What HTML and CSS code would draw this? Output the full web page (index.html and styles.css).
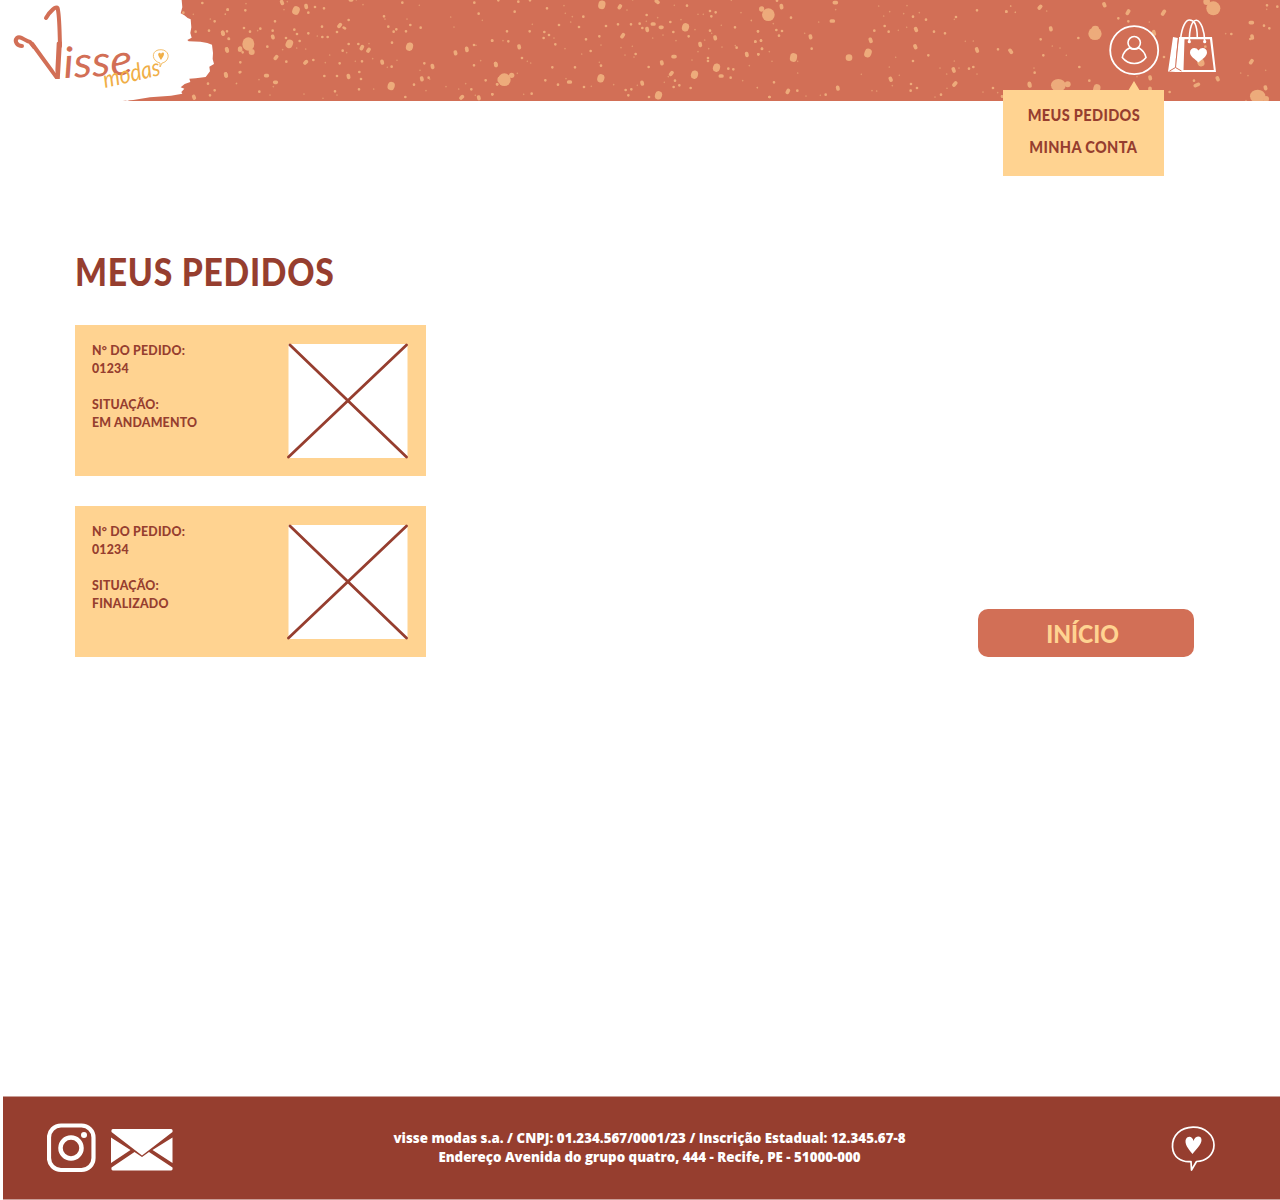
FILE: index.html
```html
<!DOCTYPE html>
<html lang="pt-BR">
<head>
<meta charset="utf-8">
<title>Visse Modas - Meus Pedidos</title>
<link rel="stylesheet" href="styles.css">
</head>
<body>
<header class="header">
  <svg class="header-art" width="1280" height="101" viewBox="0 0 1280 101" aria-hidden="true">
    <g transform="scale(.33333)">
      <path class="m" d="M668 97l2 5M680 147l2 6M677 222l2 6M581 289l2 5M719 146v4"/>
      <path class="s" d="M607 9h0M683 29h0M644 64h0M587 95h0M627 92h0M686 116h0M624 251h0M644 271h0M630 286h0M550 38h0M719 217h0"/>
      <path class="t" d="M580 43h0M676 43h0M631 57h0M710 250h0"/>
      <path class="brush" d="M0 0H545L547 22L542 40L553 46L563 54L572 58L574 82L571 99L575 113L562 120L566 124L601 125L622 129L636 134L639 159L638 177L642 192L628 200L630 214L617 231L587 235L568 236L571 246L554 252L542 262L553 266L544 276L547 281L513 287L450 292L400 300L366 303H0Z"/>
      <path class="brush-dots" d="M366 301h3M380 301h4M460 286h5"/>
    </g>
    <g transform="translate(220 0) scale(.33333)">
      <ellipse cx="85" cy="132" rx="18" ry="20"/><circle cx="95" cy="156" r="9"/>
      <path class="l" d="M229 29l-2 5M209 129l-2 5M569 138l-1 4M514 256l-1 4"/>
      <path class="m" d="M185 5l2 5M258 17l1 5M8 97l1 5M20 147l1 4M61 144l1 6M158 109l1 4M17 222l1 5M170 170l-4 5M259 185l-4 4M142 227h-5M169 247h-5M361 74l-4 5M427 140l-3 6M447 148l-3 5M486 184l1 5M385 227l1 5M637 197l1 5M605 234l1 5M706 156l1 5M740 145l1 6M827 191l1 5M727 290l-4 4M776 291l1 5M391 0h4M838 236v6"/>
      <path class="s" d="M23 29h0M76 31h0M285 21h0M265 38h0M312 25h0M165 64h0M72 84h0M121 86h0M158 92h0M90 95h0M21 94h0M223 89h0M231 102h0M265 100h0M306 80h0M386 60h0M351 96h0M371 83l4 2M307 111h0M323 111h0M239 123h0M198 114h0M142 140h0M27 117h0M68 157h0M199 185h0M280 180h0M359 190h0M368 152h0M386 132h0M415 132h0M426 184h0M61 187h0M61 216h0M313 228h0M351 228h0M118 275h0M345 274h0M417 268h0M418 216h0M423 237h0M515 200h0M516 128h0M492 49h0M505 80h0M529 88h0M521 95h0M558 94h0M571 75h0M602 83h0M547 8h0M763 8h0M776 41h0M817 122h0M762 135h0M762 196h0M613 190h0M626 233h0M582 254h0M556 291h0M754 268h0M797 241h0M817 283h0M832 253h0"/>
      <path class="t" d="M78 11h0M202 5h0M192 29h0M16 42h0M113 92h0M292 108h0M230 144h0M188 149h0M257 147h0M329 165h0M316 188h0M380 158h0M406 184h0M447 131h0M458 176h0M502 202h0M531 181h0M495 57h0M561 57h0M598 16h0M429 14h0M409 0h0M692 51h0M702 81h0M787 61h0M768 136h0M782 182h0M600 211h0M629 237h0M678 260h0M618 272h0M716 267h0M737 251h0M766 286h0M461 267h0M351 285h0M309 295h0M252 282h0M150 285h0M117 239h0M49 251h0M160 260h0"/>
    </g>
    <g transform="translate(490 0) scale(.33333)">
      <circle cx="43" cy="239" r="19"/><circle cx="65" cy="226" r="8"/>
      <path class="l" d="M336 12l-1 5M587 80l-1 4M333 233l-1 4M614 222l-1 4M680 201l-1 4M506 284l-1 4"/>
      <path class="m" d="M391 18l-3 5M499 3l5 4M492 72h-5M516 82h-5M471 86l1 5M400 104l-4 6M87 138l1 5M17 191l1 5M241 246h-5M456 247l1 5M515 186l1 5M555 170h-6M546 218l-4 5M630 131l1 5M675 111l1 5M696 228h-5M770 161l1 5"/>
      <path class="s" d="M74 35h0M85 5h0M25 1h0M120 1h0M171 25h0M280 50h0M207 75h0M267 81h0M51 94h0M119 94h0M163 96h0M177 105h0M161 114h0M196 133h0M288 118h0M328 109h0M348 78h0M384 73h0M423 73h0M449 71h0M457 84h0M470 45h0M541 66h0M550 96h0M591 17h0M596 109h0M660 33h0M677 37h0M664 49h0M660 92h0M735 82h0M804 94h0M796 125h0M813 122h0M816 146h0M805 163h0M740 143h0M654 174h0M654 183h0M437 162h0M476 201h0M302 153h0M333 197h0M255 202h0M187 202h0M96 174h0M55 124h0M6 122h0M21 253h0M7 283h0M166 241h0M204 254h0M125 281h0M282 261h0M407 270h0M424 268h0M415 286h0M477 291h0M555 242h0M551 261h0M568 256h0M602 264h0M715 206h0M730 208h0M722 233h0M838 291h0"/>
      <path class="t" d="M222 17h0M226 40h0M247 50h0M242 66h0M127 73h0M192 114h0M225 146h0M275 162h0M333 135h0M393 143h0M427 139h0M405 165h0M432 171h0M328 187h0M112 184h0M122 189h0M39 122h0M82 220h0M101 283h0M228 236h0M304 259h0M371 254h0M442 256h0M523 247h0M535 230h0M606 180h0M624 155h0M644 120h0M656 146h0M665 100h0M694 76h0M615 89h0M558 122h0M488 114h0M519 105h0M469 64h0M503 53h0M553 16h0M624 43h0M640 43h0M573 59h0M411 30h0M753 38h0M784 61h0M696 141h0M736 137h0M778 197h0M758 242h0M802 263h0M428 0h0M724 1h0"/>
    </g>
    <g transform="translate(750 0) scale(.33333)">
      <circle cx="55" cy="44" r="19"/><circle cx="35" cy="27" r="8"/>
      <path class="l" d="M131 170l-1 5M355 156l-2 6"/><circle cx="297" cy="173" r="10"/>
      <path class="m" d="M94 17l1 6M259 8h-6M250 63h-6M181 108l1 5M361 118l2 6M497 86l2 5M495 138l2 5M680 147l2 6M610 207l2 6M617 249l-5 6M421 235l2 5M263 262l1 5M115 271l-3 6M838 250v6"/>
      <path class="s" d="M81 2h0M123 53h0M79 90h0M96 93h0M87 107h0M33 122h0M24 94h0M16 125h0M36 147h0M25 163h0M185 146h0M72 247h0M59 291h0M142 272h0M227 284h0M373 92h0M404 78h0M416 95h0M489 50h0M528 59h0M552 95h0M585 100h0M618 51h0M681 31h0M769 35h0M744 148h0M780 151l4 5M657 206h0M670 201h0M535 166h0M489 183h0M483 252h0M501 264h0M482 272h0M573 284h0M729 264h0M757 290h0"/>
      <path class="t" d="M4 62h0M70 71h0M206 66h0M257 29h0M164 100h0M58 155h0M66 184h0M143 184h0M143 219h0M22 263h0M168 288h0M211 286h0M334 223h0M366 272h0M380 273h0M427 257h0M448 226h0M418 201h0M437 172h0M386 18h0M401 48h0M419 35h0M461 41h0M471 17h0M508 38h0M470 82h0M445 91h0M613 58h0M646 124h0M670 123h0M782 18h0M796 37h0M613 183h0M627 204h0M681 222h0M590 222h0M570 204h0M591 265h0M555 291h0M699 276h0M743 278h0"/>
    </g>
    <g transform="translate(1000 0) scale(.33333)">
      <ellipse cx="285" cy="101" rx="20" ry="19"/><ellipse cx="286" cy="87" rx="11" ry="10"/>
      <circle cx="640" cy="25" r="21"/><circle cx="620" cy="5" r="10"/>
      <ellipse cx="175" cy="256" rx="22" ry="19"/><circle cx="203" cy="253" r="9"/>
      <ellipse cx="773" cy="289" rx="23" ry="20"/><circle cx="798" cy="297" r="9"/>
      <path class="l" d="M602 186l1 3M291 263l-2 9"/>
      <path class="m" d="M122 19l-4 5M312 12l2 5M386 33l-4 7M493 34l-5 8M152 84l1 5M461 95l2 7M757 68h-6M756 108l1 6M756 182l-4 6M652 234l2 5M450 231l1 5M450 265v6M89 252l1 6M595 253l-9 4M796 261l1 5M30 151l4 6"/>
      <path class="s" d="M19 35h0M355 55h0M385 64h0M122 118h0M130 166h0M235 114h0M238 201h0M104 218h0M268 242h0M509 276h0M582 242h0M492 171h0M694 102h0M792 77h0M808 85h0M801 16h0M832 20h0M751 117h0M774 280h0M616 140h0M6 289h0"/>
      <path class="t" d="M32 18h0M46 37h0M140 33h0M157 138h0M180 144h0M199 166h0M102 204h0M800 28h0M677 101h0M797 211h0M722 219h0M744 227h0M411 230h0M448 66h0M738 302h0"/>
    </g>
  </svg>

  <a class="logo" href="#" aria-label="Visse modas">
    <svg width="180" height="101" viewBox="0 0 180 101">
      <text class="logo-v" transform="matrix(.97 0 .338 1 40.500 79)">V</text>
      <path class="hanger" d="M22 46C17 46 14 41 17 38C20 35 25 41 30 42L34 47"/>
      <path class="hanger" d="M46 18C50 11 56 6 57.500 8C59.500 14 59.500 30 60 46"/>
      <text class="logo-main" transform="translate(64 78) rotate(-3)" textLength="69" lengthAdjust="spacingAndGlyphs">isse</text>
      <text class="logo-sub" transform="translate(105 88) rotate(-13)" textLength="58" lengthAdjust="spacingAndGlyphs">modas</text>
      <path class="bubble" d="M160 63C152 61 151 52 158 50C167 48 171 56 166 61C165 62 163 63 162 63L160 67Z"/>
      <path class="gold-heart" d="M161 60C159 57 157 54 159 53C161 52 161 55 161 55C161 52 164 52 164 54C164 56 162 58 161 60Z"/>
    </svg>
  </a>

  <nav class="actions">
    <a class="account" href="#" aria-label="Conta">
      <svg width="51" height="51" viewBox="0 0 51 51" fill="none" stroke="#fff">
        <circle cx="25.200" cy="25.200" r="24" stroke-width="1.800"/>
        <circle cx="25.200" cy="17.700" r="6.200" stroke-width="1.600"/>
        <path stroke-width="1.600" d="M20.500 23C16.500 25 14 28 13.300 32.500C19.500 40.500 31 40.500 37 32.500C36 28 33.500 25 30 23C27 24.500 23.500 24.500 20.500 23Z"/>
      </svg>
    </a>
    <a class="cart" href="#" aria-label="Sacola">
      <svg width="49" height="54" viewBox="0 0 49 54">
        <path fill="#fff" fill-rule="evenodd" d="M11 18H44L48 53H8L0 52.500L5 18L10 19L7 48L11 18ZM16.500 20.300L15.500 51H45.800L42 20.300Z"/>
        <path fill="none" stroke="#d26f56" stroke-width="1" d="M10.500 18L7.500 48.500L13.500 52M7.500 48.500L1.500 52"/>
        <path fill="none" stroke="#fff" stroke-width="1.600" d="M12.700 19C14 8 17.500 1 21.500 1Q25 1 27 4.500C28.700 8 29.300 13 29.300 18.500"/>
        <path fill="none" stroke="#fff" stroke-width="1.600" d="M21.300 23C21.300 9 24 1 28.500 1.200C33 2 36.700 12 36.700 23"/>
        <circle cx="21.300" cy="22.700" r="1.600" fill="#fff"/><circle cx="36.700" cy="22.700" r="1.600" fill="#fff"/>
        <path fill="#fff" d="M30.500 43.500C27 40 22 37.500 22 33.500C22 28.500 28 27.500 30.500 31.500C33 27.500 39 28.500 39 33.500C39 37.500 33.500 40.500 30.500 43.500Z"/>
      </svg>
    </a>
  </nav>
  <div class="menu">
    <a href="#">MEUS PEDIDOS</a>
    <a href="#">MINHA CONTA</a>
  </div>
</header>

<main class="main">
  <section class="orders">
    <h1>MEUS PEDIDOS</h1>
    <article class="order">
      <div class="order-info">
        <p>N° DO PEDIDO:<br>01234</p>
        <p>SITUAÇÃO:<br>EM ANDAMENTO</p>
      </div>
      <svg class="photo" width="121" height="116" viewBox="0 0 121 116"><path fill="#fff" d="M1.500 1H120.500V115H1.500Z"/><path class="cross" d="M3 2L119.500 114M119.500 2L1.500 114"/></svg>
    </article>
    <article class="order">
      <div class="order-info">
        <p>N° DO PEDIDO:<br>01234</p>
        <p>SITUAÇÃO:<br>FINALIZADO</p>
      </div>
      <svg class="photo" width="121" height="116" viewBox="0 0 121 116"><path fill="#fff" d="M1.500 1H120.500V115H1.500Z"/><path class="cross" d="M3 2L119.500 114M119.500 2L1.500 114"/></svg>
    </article>
  </section>
  <a class="home-button" href="#"><span>INÍCIO</span></a>
</main>

<footer class="footer">
  <div class="social">
    <svg width="49" height="50" viewBox="0 0 49 50" fill="none" stroke="#fff">
      <rect x="2" y="2.500" width="44.500" height="44.500" rx="12" stroke-width="4.200"/>
      <circle cx="24" cy="25" r="10.500" stroke-width="4.500"/>
      <circle cx="37" cy="12" r="3" fill="#fff" stroke="none"/>
    </svg>
    <svg class="mail" width="62" height="42" viewBox="0 0 62 42" fill="#fff">
      <path d="M2 0H60Q62 0 61.500 3L31 26.500L.5 3Q0 0 2 0ZM0 8.500L19.500 21L0 34ZM61.500 8.500V34L41.500 21ZM23.500 23L31 28L38 23L61.500 38.500Q62 41.500 60 41.500H2Q0 41.500 .5 38.500Z"/>
    </svg>
  </div>
  <p class="company"><span class="registry">visse modas s.a. / CNPJ: 01.234.567/0001/23 / Inscrição Estadual: 12.345.67-8</span><br>Endereço Avenida do grupo quatro, 444 - Recife, PE - 51000-000</p>
  <svg class="chat" width="45" height="46" viewBox="0 0 45 46" aria-hidden="true">
    <path fill="none" stroke="#fff" stroke-width="1.700" stroke-linejoin="round" d="M20 35.500C10 36.500 2 31 1.500 21C1 9 10 1.500 22 1.200C34 1 43 9 43 19C43 29 35 35 25.500 35.500L20.500 44Z"/>
    <path fill="#fff" d="M21.500 28C17 23 13 17 15 13C17 9 22 10.500 22.500 15C24 9.500 30.500 9 30.500 14C30.500 19 25 23 21.500 28Z"/>
  </svg>
</footer>
</body>
</html>
```
FILE: styles.css
```css
* { box-sizing: border-box; }
body { margin: 0; width: 1280px; height: 1200px; display: flex; flex-direction: column; background: #fff; font-family: Lato, sans-serif; font-weight: 900; color: #963e2f; overflow: hidden; }
a { color: inherit; text-decoration: none; }
svg { display: block; flex: none; }

.header { position: relative; height: 101px; flex: none; display: flex; justify-content: space-between; background: #d26f56; }
.header-art { position: absolute; inset: 0; fill: #edab7b; }
.header-art path { stroke: #edab7b; stroke-linecap: round; }
.header-art .t { stroke-width: 5; opacity: .65; }
.header-art .s { stroke-width: 8; }
.header-art .m { stroke-width: 11; }
.header-art .l { stroke-width: 21; }
.header-art .brush { fill: #fff; stroke: none; }
.header-art .brush-dots { stroke: #fff; stroke-width: 3; }

.logo { position: relative; }
.logo svg { overflow: visible; }
.logo text { font-family: Lato, sans-serif; font-weight: 400; }
.hanger { fill: none; stroke: #d26f56; stroke-width: 4; stroke-linecap: round; stroke-linejoin: round; }
.logo-v { font-size: 52px; fill: #d26f56; }
.logo-main { font-size: 43px; font-style: italic; fill: #d26f56; }
.logo-sub { font-size: 24px; font-style: italic; fill: #f0ae46; }
.bubble { fill: none; stroke: #f0ae46; stroke-width: .8; }
.gold-heart { fill: #f0ae46; }

.actions { position: relative; display: flex; gap: 8px; padding: 19px 63px 0 0; }
.account { padding-top: 6px; }

.menu { position: absolute; z-index: 1; left: 1003.200px; top: 90.400px; width: 161px; height: 86px; display: flex; flex-direction: column; align-items: center; gap: 12px; padding-top: 15px; background: #ffd391; font-size: 16.500px; line-height: 20px; letter-spacing: .4px; }
.menu a { transform: scaleX(.88); white-space: nowrap; }
.menu::before { content: ""; position: absolute; left: 125px; top: -9px; border: solid transparent; border-width: 0 6px 10px; border-bottom-color: #ffd391; }

.main { flex: 1; display: flex; justify-content: space-between; align-items: flex-start; padding: 149px 86px 0 75px; }
.orders { width: 351px; display: flex; flex-direction: column; gap: 29.500px; }
h1 { margin: 0; height: 45.500px; font-size: 37px; line-height: 44px; font-weight: 900; letter-spacing: .8px; white-space: nowrap; transform: scaleX(.91); transform-origin: left; }
.order { height: 151px; display: flex; justify-content: space-between; padding: 17px 18px 0 17px; background: #ffd391; font-size: 13px; line-height: 18px; letter-spacing: .2px; }
.order-info { margin-top: -1px; transform: scaleX(.95); transform-origin: left; }
.order-info p { margin: 0 0 18px; }
.photo { margin-top: 1px; }
.cross { fill: none; stroke: #963e2f; stroke-width: 2.800; stroke-linecap: round; }
.home-button { width: 216px; height: 48px; margin-top: 359px; border-radius: 10px; background: #d26f56; color: #ffd391; text-align: center; font-size: 24.500px; line-height: 49px; }
.home-button span { display: inline-block; transform: translateX(-3px) scaleX(.94); }

.footer { height: 104px; margin-left: 3px; display: flex; align-items: center; justify-content: space-between; padding: 0 64px 0 44px; background: #963e2f; border: solid #ca9e97; border-width: 1px 0; color: #fff; }
.social { display: flex; align-items: center; gap: 15px; }
.mail { margin-top: 4px; }
.company { margin: 0 0 0 -45px; text-align: center; font: 800 13.300px/19px "Open Sans", sans-serif; }
.registry { letter-spacing: .035px; }
.chat { margin-top: 2px; }
```
